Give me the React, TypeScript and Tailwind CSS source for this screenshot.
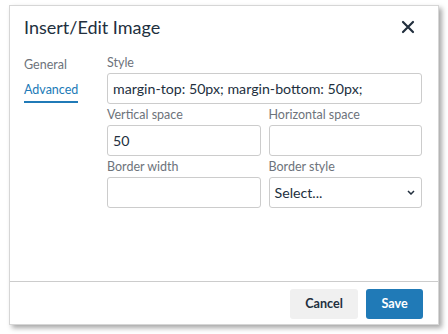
import React, { useState } from 'react';

const inputCls =
  'w-full h-[31px] border border-[#cccccc] rounded-[3px] px-[5px] text-[14.2px] text-[#222f3e] bg-white outline-none';
const labelCls = 'text-[12.5px] text-[#6d737b] leading-[20px] h-[20px]';

const App: React.FC = () => {
  const [tab, setTab] = useState<'general' | 'advanced'>('advanced');

  return (
    <div className="w-[448px] h-[334px] bg-white pt-[5px] pl-[9px]" style={{ fontFamily: 'Lato, "Open Sans", sans-serif' }}>
      <div className="w-[430px] h-[320px] bg-white border border-[#d6d6d6] shadow-[3px_3px_5px_rgba(0,0,0,0.35)] flex flex-col">
        <div className="flex items-center justify-between pl-[14px] pr-[19px] h-[42px]">
          <h1 className="text-[18px] text-[#222f3e]">Insert/Edit Image</h1>
          <button className="text-[#222f3e] p-1">
            <svg width="14" height="14" viewBox="0 0 14 14">
              <path d="M2 2 L12 12 M12 2 L2 12" stroke="currentColor" strokeWidth="2.2" strokeLinecap="round" />
            </svg>
          </button>
        </div>

        <div className="flex flex-1 pl-[14px] pr-[16px] pt-[5px]">
          <div className="w-[83px] flex flex-col text-[12.5px]">
            <button
              onClick={() => setTab('general')}
              className={`text-left w-fit h-[24px] mb-[2px] ${tab === 'general' ? 'text-[#207ab7] border-b-2 border-[#207ab7]' : 'text-[#6d737b]'}`}
            >
              General
            </button>
            <button
              onClick={() => setTab('advanced')}
              className={`text-left w-fit h-[24px] ${tab === 'advanced' ? 'text-[#207ab7] border-b-2 border-[#207ab7]' : 'text-[#6d737b]'}`}
            >
              Advanced
            </button>
          </div>

          <div className="flex-1 flex flex-col">
            <label className={labelCls}>Style</label>
            <input className={inputCls} defaultValue="margin-top: 50px; margin-bottom: 50px;" />
            <div className="grid grid-cols-2 gap-x-[8px] mt-[1px]">
              <div className="flex flex-col">
                <label className={labelCls}>Vertical space</label>
                <input className={inputCls} defaultValue="50" />
              </div>
              <div className="flex flex-col">
                <label className={labelCls}>Horizontal space</label>
                <input className={inputCls} />
              </div>
              <div className="flex flex-col mt-[1px]">
                <label className={labelCls}>Border width</label>
                <input className={inputCls} />
              </div>
              <div className="flex flex-col mt-[1px]">
                <label className={labelCls}>Border style</label>
                <div className="relative">
                  <div className={`${inputCls} flex items-center`}>Select...</div>
                  <svg className="absolute right-[7px] top-[13px]" width="8" height="5" viewBox="0 0 8 5">
                    <path d="M1 1 L4 4 L7 1" fill="none" stroke="#222f3e" strokeWidth="1.5" />
                  </svg>
                </div>
              </div>
            </div>
          </div>
        </div>

        <div className="border-t border-[#cccccc] h-[43px] flex items-start justify-end gap-[8px] pt-[7px] pr-[15px]">
          <button className="h-[30px] w-[68px] rounded-[3px] bg-[#f0f0f0] text-[12.6px] font-bold text-[#222f3e]">
            Cancel
          </button>
          <button className="h-[30px] w-[57px] rounded-[3px] bg-[#207ab7] text-[12.6px] font-bold text-white">
            Save
          </button>
        </div>
      </div>
    </div>
  );
};

export default App;
